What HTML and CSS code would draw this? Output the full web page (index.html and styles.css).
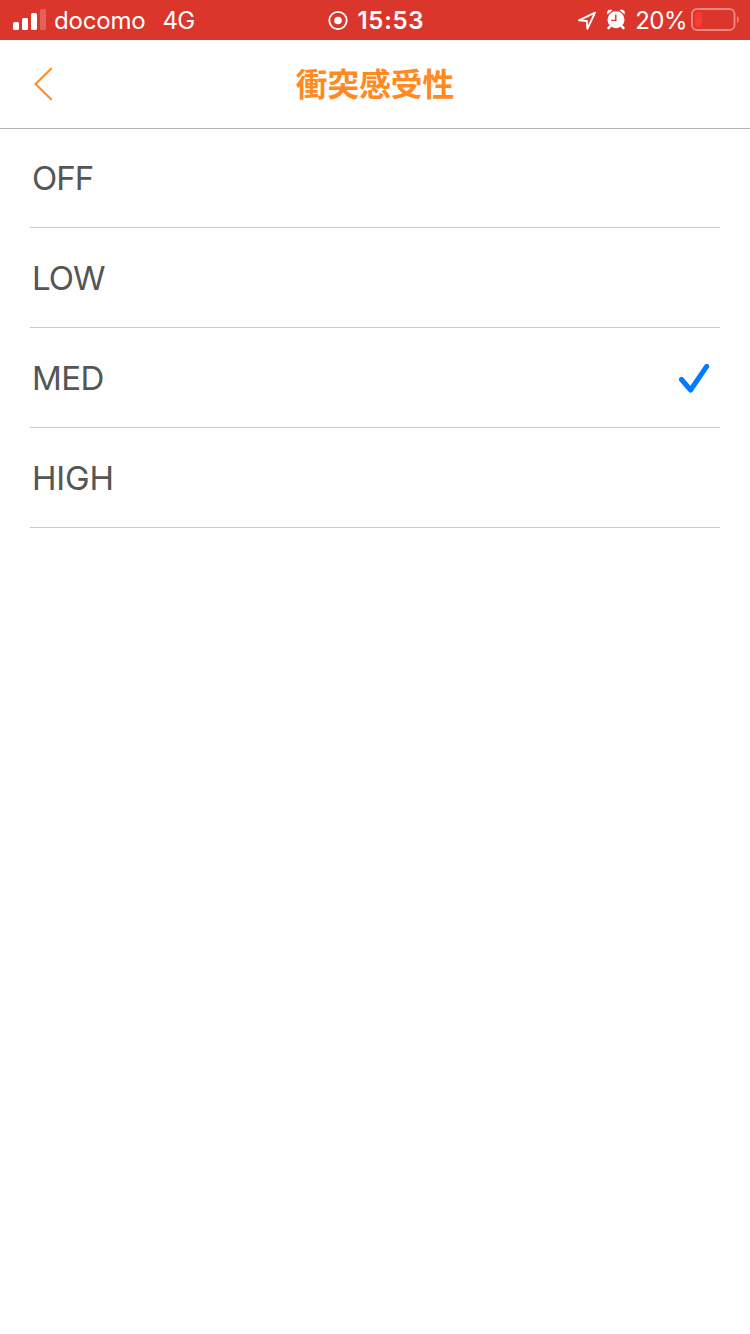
FILE: index.html
```html
<!DOCTYPE html>
<html lang="ja">
<head>
<meta charset="utf-8">
<title>衝突感受性</title>
<link rel="stylesheet" href="styles.css">
</head>
<body>
	<div class="status">
		<div class="status-left">
			<svg class="signal" width="34" height="40" viewBox="0 0 34 40">
				<rect x="0" y="22" width="6" height="8" rx="1.5" fill="#fff"/>
				<rect x="9" y="18" width="6" height="12" rx="1.5" fill="#fff"/>
				<rect x="18" y="13" width="6" height="17" rx="1.5" fill="#fff"/>
				<rect x="27" y="9" width="6" height="21" rx="1.5" fill="#fff" opacity=".22"/>
			</svg>
			<span class="carrier">docomo</span>
			<span class="network">4G</span>
		</div>
		<div class="status-center">
			<svg width="20" height="40" viewBox="0 0 20 40">
				<circle cx="10" cy="20.5" r="8.7" fill="none" stroke="#fff" stroke-width="1.8"/>
				<circle cx="10" cy="20.5" r="3.8" fill="#fff"/>
			</svg>
			<span class="time">15:53</span>
		</div>
		<div class="status-right">
			<svg class="location" width="20" height="40" viewBox="0 0 20 40">
				<path d="M18 12.6 2 20.4l7.8.6.6 7.8z" fill="none" stroke="#fff" stroke-width="1.9" stroke-linejoin="round"/>
			</svg>
			<svg class="alarm" width="20" height="40" viewBox="0 0 20 40">
				<circle cx="10" cy="19.8" r="8.5" fill="#fff"/>
				<path d="M1.4 14.6C.2 11 3 8.8 6.4 10.2zM18.6 14.6c1.2-3.6-1.6-5.8-5-4.4z" fill="#fff"/>
				<path d="M4.4 26 2.6 28M15.6 26l1.8 2" stroke="#fff" stroke-width="2.6" stroke-linecap="round"/>
				<path d="M9.8 14.4v6H5.2" fill="none" stroke="#da362c" stroke-width="1.4"/>
			</svg>
			<span class="percent">20%</span>
			<svg class="battery" width="49" height="40" viewBox="0 0 49 40">
				<rect x="1" y="9" width="42.5" height="21" rx="5" fill="none" stroke="#ea8681" stroke-width="2"/>
				<rect x="4" y="12" width="7" height="15" rx="2.5" fill="#ff3b30"/>
				<path d="M46 16c2.5 1 2.5 6 0 7z" fill="#ea8681"/>
			</svg>
		</div>
	</div>

	<div class="header">
		<a class="back" href="#">
			<svg width="20" height="34" viewBox="0 0 20 34">
				<path d="M18.6 1.2 2.5 17l16.1 15.8" fill="none" stroke="#ff8a1f" stroke-width="2"/>
			</svg>
		</a>
		<h1 class="title">衝突感受性</h1>
	</div>

	<ul class="list">
		<li class="item"><span class="label off">OFF</span></li>
		<li class="item"><span class="label low">LOW</span></li>
		<li class="item">
			<span class="label med">MED</span>
			<svg class="check" width="32" height="32" viewBox="0 0 32 32">
				<path d="M3.5 17.5 12.6 28 28.7 4.3" fill="none" stroke="#007aff" stroke-width="5" stroke-linecap="round" stroke-linejoin="round"/>
			</svg>
		</li>
		<li class="item"><span class="label high">HIGH</span></li>
	</ul>
</body>
</html>
```
FILE: styles.css
```css
* {
	margin: 0;
	padding: 0;
	box-sizing: border-box;
}

body {
	background: #fefefe;
	color: #555;
	font-family: Inter, "Noto Sans CJK JP", sans-serif;
}

svg {
	display: block;
	flex: none;
}

/* status bar */
.status {
	display: grid;
	grid-template-columns: 327.5px auto 1fr;
	height: 40px;
	background: #da362c;
	color: #fff;
	font-size: 24px;
	line-height: 41px;
	white-space: nowrap;
}

.status-left,
.status-center,
.status-right {
	display: flex;
}

.status-left {
	padding-left: 13px;
}

.carrier {
	margin-left: 7px;
	letter-spacing: -0.2px;
}

.network {
	margin-left: 17px;
	letter-spacing: -0.7px;
}

.time {
	margin-left: 10px;
	font-weight: 600;
	letter-spacing: 0.7px;
}

.status-right {
	justify-content: flex-end;
	padding-right: 10px;
}

.alarm {
	margin-left: 9px;
}

.percent {
	margin-left: 9px;
	letter-spacing: -0.5px;
}

.battery {
	margin-left: 4px;
}

/* title bar */
.header {
	display: grid;
	grid-template-columns: 100px 1fr 100px;
	align-items: center;
	height: 89px;
	border-bottom: 1px solid #b2b2b2;
}

.back {
	padding-left: 33px;
}

.title {
	height: 88px;
	color: #ff8a1f;
	font-family: "Noto Sans CJK JP", sans-serif;
	font-size: 31.7px;
	font-weight: 700;
	line-height: 84px;
	text-align: center;
}

/* options */
.list {
	padding: 0 30px;
	list-style: none;
}

.item {
	display: flex;
	align-items: center;
	justify-content: space-between;
	height: 100px;
	padding: 0 10px 0 2px;
	border-bottom: 1px solid #c8c8c8;
}

.item:first-child {
	height: 99px;
}

.label {
	font-size: 33px;
	font-weight: 380;
	line-height: 40px;
	letter-spacing: -0.6px;
}

.off,
.low {
	letter-spacing: -1px;
}

.high {
	letter-spacing: -0.2px;
}
```
